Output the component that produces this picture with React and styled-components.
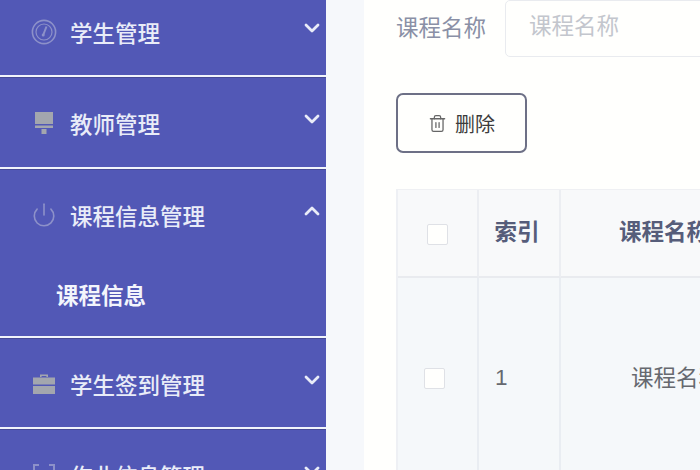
import React from "react"
import styled, { createGlobalStyle } from "styled-components"
import { ChevronDown, ChevronUp, Power, Trash2 } from "lucide-react"

const GlobalStyle = createGlobalStyle`
  html, body {
    margin: 0;
    padding: 0;
    height: 470px;
    overflow: hidden;
    background: #f6f8fb;
    font-family: "Liberation Sans", "Noto Sans CJK SC", sans-serif;
  }
  * {
    box-sizing: border-box;
  }
`

const GaugeIcon = () => (
  <svg width="26" height="26" viewBox="0 0 26 26" fill="none" stroke="#8d91c9" strokeWidth="1.6">
    <circle cx="13" cy="13" r="11.6" />
    <circle cx="13" cy="13" r="8" strokeWidth="1.2" />
    <path d="M15.5 7.5 L12.4 15.5" strokeWidth="2" />
    <circle cx="12.2" cy="16" r="1.5" fill="#8d91c9" stroke="none" />
  </svg>
)

const PodiumIcon = () => (
  <svg width="26" height="26" viewBox="0 0 26 26" fill="#a3a6ae">
    <rect x="4" y="2" width="18" height="12" />
    <rect x="4" y="15.5" width="18" height="2.5" />
    <rect x="10.5" y="19" width="5" height="5" />
  </svg>
)

const BriefcaseIcon = () => (
  <svg width="26" height="26" viewBox="0 0 26 26" fill="#a3a6ae">
    <path d="M9 6 V3.5 H17 V6 H15.4 V5 H10.6 V6 Z" />
    <rect x="2" y="6.5" width="22" height="7" />
    <rect x="2" y="15" width="22" height="8" />
  </svg>
)

const FrameIcon = () => (
  <svg width="26" height="26" viewBox="0 0 26 26" fill="none" stroke="#8d91c9" strokeWidth="2">
    <path d="M8 3 H3 V8 M18 3 H23 V8 M8 23 H3 V18 M18 23 H23 V18" />
  </svg>
)

const menus = [
  { label: "学生管理", icon: <GaugeIcon />, height: 88 },
  { label: "教师管理", icon: <PodiumIcon /> },
  { label: "课程信息管理", icon: <Power size={26} color="#8d91c9" strokeWidth={1.5} />, open: true, children: ["课程信息"] },
  { label: "学生签到管理", icon: <BriefcaseIcon />, height: 89 },
  { label: "作业信息管理", icon: <FrameIcon /> },
]

const App = () => {
  return (
    <Page>
      <GlobalStyle />
      <Sidebar>
        {menus.map(menu => (
          <MenuGroup key={menu.label}>
            <MenuHeader $height={menu.height || 90}>
              <MenuIcon>{menu.icon}</MenuIcon>
              <MenuLabel>{menu.label}</MenuLabel>
              <Arrow>
                {menu.open
                  ? <ChevronUp size={24} strokeWidth={2.8} />
                  : <ChevronDown size={24} strokeWidth={2.8} />}
              </Arrow>
            </MenuHeader>
            {menu.children && menu.children.map(child => (
              <SubItem key={child}>{child}</SubItem>
            ))}
          </MenuGroup>
        ))}
      </Sidebar>
      <Content>
        <Panel>
          <SearchRow>
            <SearchLabel>课程名称</SearchLabel>
            <SearchInput placeholder="课程名称" readOnly />
          </SearchRow>
          <DeleteButton>
            <Trash2 size={19} strokeWidth={1.6} color="#666" />
            删除
          </DeleteButton>
          <Table>
            <HeadCell $check><CheckBox /></HeadCell>
            <HeadCell $shift={4}>索引</HeadCell>
            <HeadCell $pad={58}>课程名称</HeadCell>
            <BodyCell $shift={6}><CheckBox /></BodyCell>
            <BodyCell $pad={16}>1</BodyCell>
            <BodyCell $pad={70} $lift>课程名称</BodyCell>
          </Table>
        </Panel>
      </Content>
    </Page>
  )
}

const Page = styled.div`
  display: flex;
  width: 700px;
  height: 470px;
  overflow: hidden;
`

const Sidebar = styled.nav`
  flex: 0 0 326px;
  margin-top: -13px;
  background: #5258b6;
`

const MenuGroup = styled.div`
  border-bottom: 2px solid #f1f4fb;
  box-shadow: 0 1px 0 #464a96 inset;

  &:last-child {
    border-bottom: 0;
  }
`

const MenuHeader = styled.div`
  display: flex;
  align-items: center;
  height: ${props => props.$height}px;
  padding: 2px 2px 0 31px;
  color: #e9ecf8;
`

const MenuIcon = styled.span`
  display: flex;
  width: 26px;
  height: 26px;
  margin-right: 13px;
`

const MenuLabel = styled.span`
  flex: 1;
  font-size: 22.5px;
  font-weight: 500;
  white-space: nowrap;
`

const Arrow = styled.span`
  display: flex;
  margin-bottom: 8px;
  color: #e9ecf8;
`

const SubItem = styled.div`
  display: flex;
  align-items: center;
  height: 77px;
  padding: 0 0 8px 56px;
  color: #f3f5fc;
  font-size: 22.5px;
  font-weight: 700;
`

const Content = styled.main`
  flex: 1;
  min-width: 0;
  padding-left: 38px;
`

const Panel = styled.section`
  height: 100%;
  padding-left: 32px;
  overflow: hidden;
  background: #fffffd;
`

const SearchRow = styled.div`
  display: flex;
  align-items: center;
  width: 400px;
`

const SearchLabel = styled.label`
  flex: 0 0 109px;
  padding-bottom: 5px;
  color: #8a90a6;
  font-size: 22.5px;
  white-space: nowrap;
`

const SearchInput = styled.input`
  width: 300px;
  height: 57px;
  padding: 0 0 3px 23px;
  border: 1px solid #e9ebef;
  border-radius: 5px;
  outline: none;
  background: #fffffd;
  font-family: inherit;
  font-size: 22.5px;

  &::placeholder {
    color: #c3c6cd;
  }
`

const DeleteButton = styled.button`
  display: flex;
  align-items: center;
  justify-content: center;
  gap: 8px;
  width: 131px;
  height: 60px;
  margin-top: 36px;
  border: 2px solid #6d7086;
  border-radius: 7px;
  background: #fffffd;
  color: #3c3c3c;
  font-family: inherit;
  font-size: 20px;
`

const Table = styled.div`
  display: grid;
  grid-template-columns: 81px 82px 420px;
  grid-template-rows: 88px 200px;
  width: 583px;
  margin-top: 36px;
  border-top: 1px solid #eff0f3;
  border-left: 2px solid #eef0f4;
`

const HeadCell = styled.div`
  display: flex;
  align-items: center;
  justify-content: ${props => (props.$pad ? "flex-start" : "center")};
  padding-left: ${props => props.$pad || 0}px;
  padding-right: ${props => props.$shift || 0}px;
  padding-top: ${props => (props.$check ? 3 : 0)}px;
  padding-bottom: ${props => (props.$check ? 0 : 7)}px;
  border-right: 2px solid #eceef2;
  border-bottom: 2px solid #e9ebef;
  background: #f8f9fa;
  color: #565d7a;
  font-size: 22.5px;
  font-weight: 700;
  white-space: nowrap;
`

const BodyCell = styled.div`
  display: flex;
  align-items: center;
  justify-content: ${props => (props.$pad ? "flex-start" : "center")};
  padding-left: ${props => props.$pad || 0}px;
  padding-right: ${props => props.$shift || 0}px;
  padding-bottom: ${props => (props.$lift ? 4 : 0)}px;
  border-right: 2px solid #e9edf2;
  background: #f5f8fa;
  color: #66696f;
  font-size: 22.5px;
  white-space: nowrap;
`

const CheckBox = styled.span`
  display: block;
  width: 21px;
  height: 21px;
  border: 1.5px solid #dfe1e6;
  border-radius: 2px;
  background: #fffffd;
`

export default App
